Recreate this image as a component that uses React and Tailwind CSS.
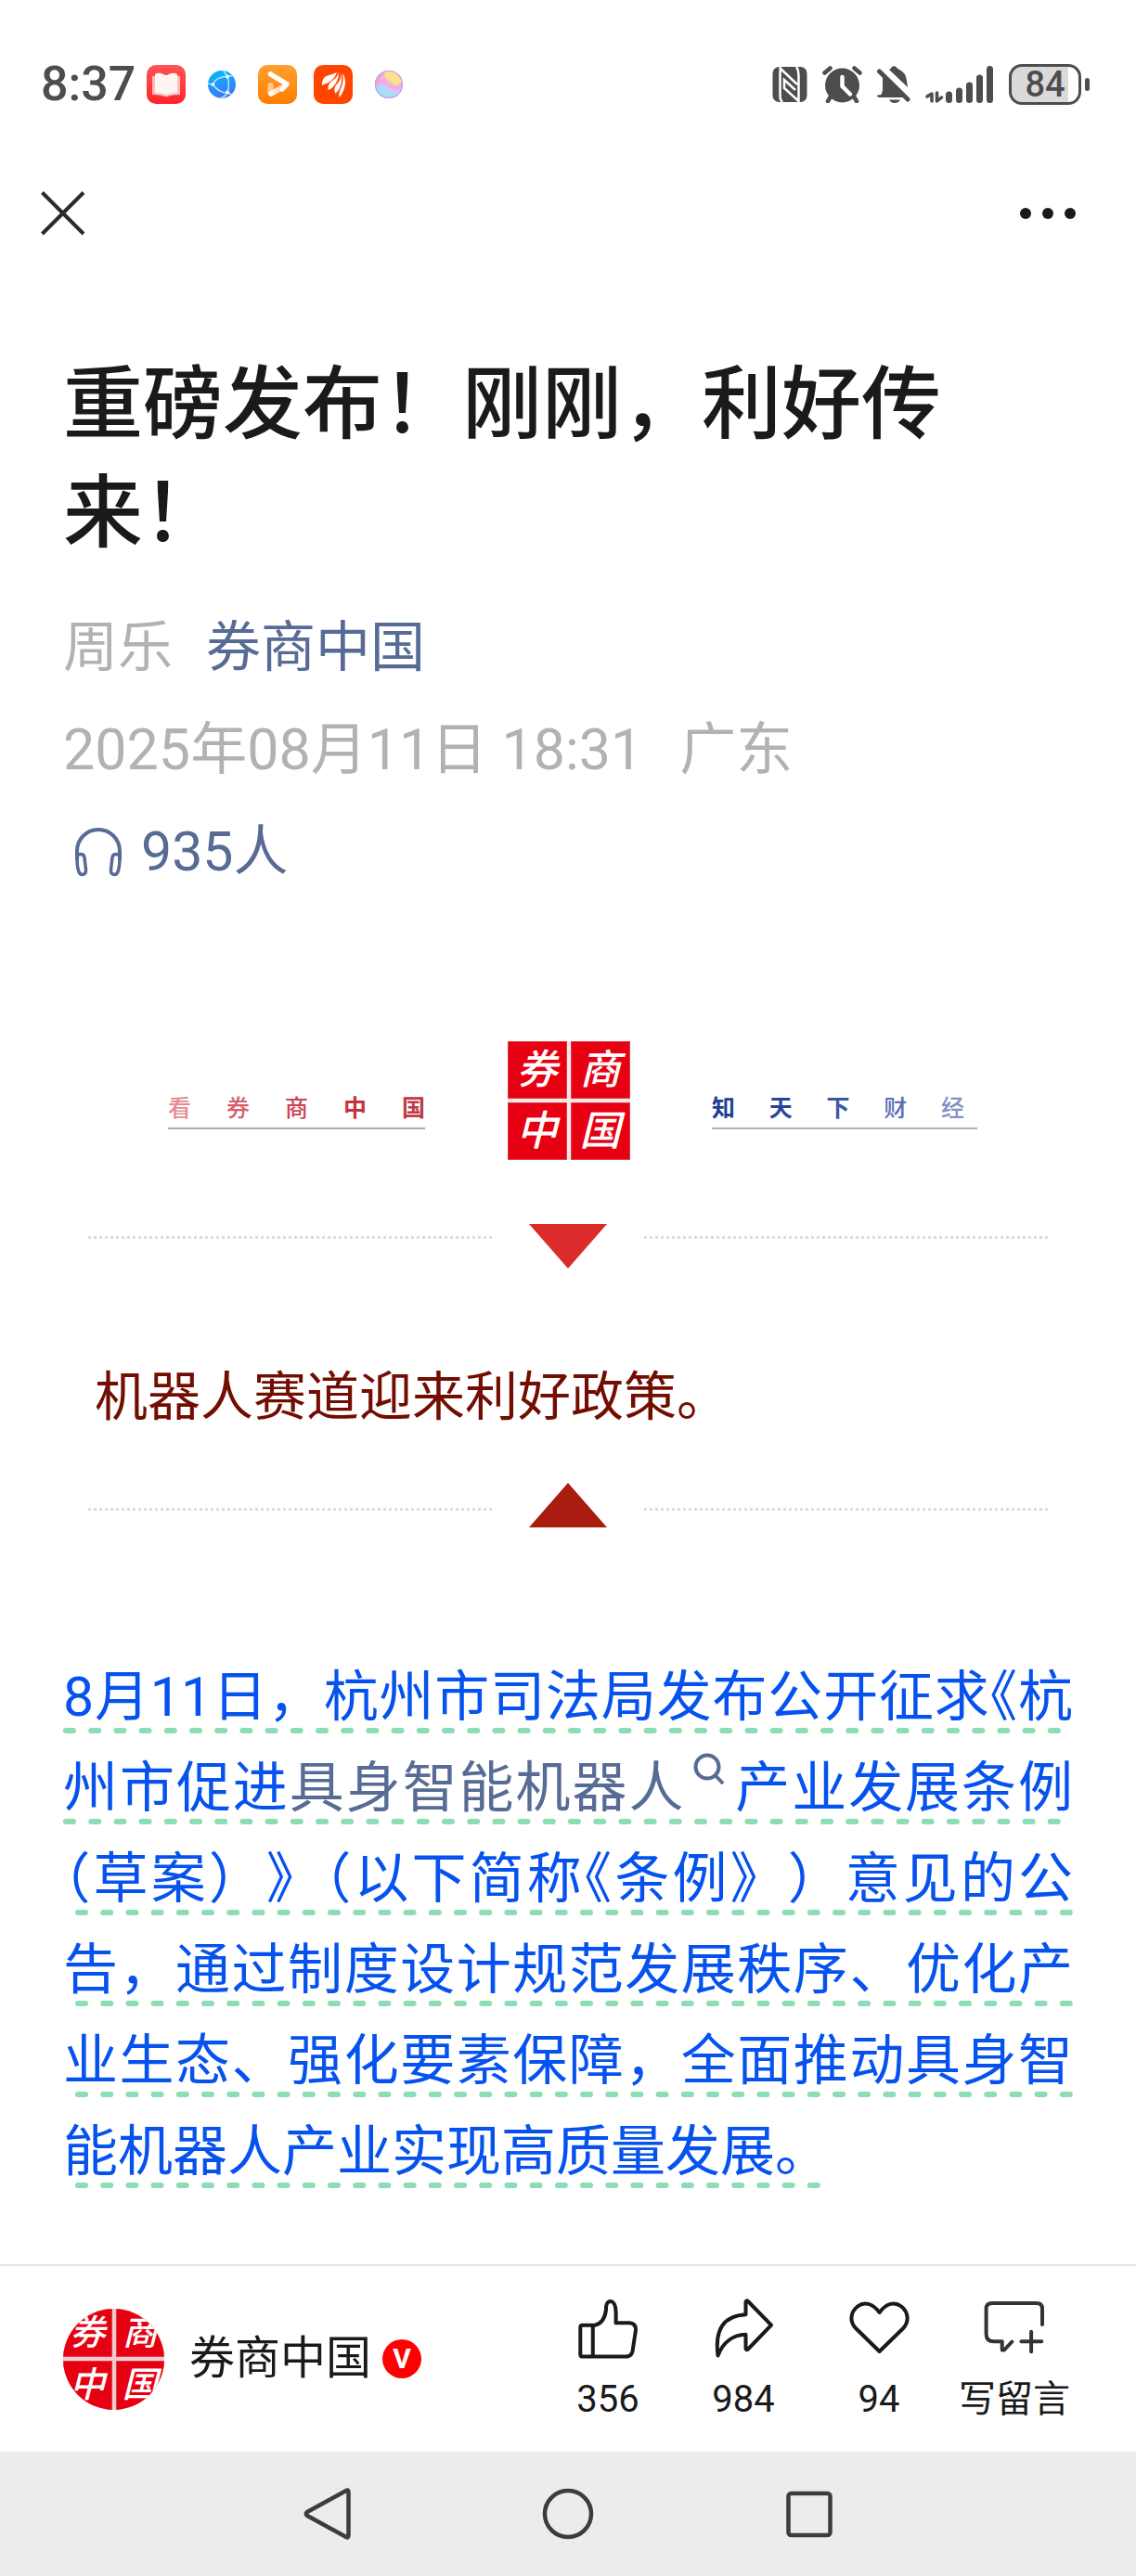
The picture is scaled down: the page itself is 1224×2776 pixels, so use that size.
const ink = "#1a1a1a";

function StatusApps() {
  return (
    <div className="flex items-center gap-[18px]">
      <svg width="42" height="42" viewBox="0 0 42 42" aria-hidden="true">
        <defs>
          <linearGradient id="reader" x1="0" y1="0" x2="0" y2="1">
            <stop offset="0" stopColor="#ff5555" />
            <stop offset="1" stopColor="#ff2428" />
          </linearGradient>
        </defs>
        <rect width="42" height="42" rx="10" fill="url(#reader)" />
        <path d="M6 12h30v20q-10 0-15 2.500q-5-2.500-15-2.500z" fill="#ffbcbc" />
        <path d="M9 10q4-2 8-.5q2.500 1.500 4 1.500q1.500 0 4-1.500q4-1.500 8 .5v20.500q-8-.5-12 2q-4-2.500-12-2z" fill="#fff5f3" />
      </svg>
      <svg width="42" height="42" viewBox="0 0 42 42" aria-hidden="true">
        <defs>
          <linearGradient id="globe" x1="0" y1="0" x2="0.3" y2="1">
            <stop offset="0" stopColor="#00bfff" />
            <stop offset="1" stopColor="#3b78f5" />
          </linearGradient>
          <clipPath id="globeClip"><circle cx="21" cy="21" r="15" /></clipPath>
        </defs>
        <circle cx="21" cy="21" r="15" fill="url(#globe)" />
        <g clipPath="url(#globeClip)" fill="none" stroke="#b5e4ff" strokeWidth="1.500">
          <path d="M11 21q5-9 16-8.500q3 9 0 17.500q-9 0-16-9M6 20l5 1M27 12.500q5-1 8-1M27 30l5 2M27 12.500L22 5M27 30q-3 5-8 6" />
        </g>
        <circle cx="11.500" cy="21" r="1.800" fill="#fff" />
        <circle cx="27" cy="12.500" r="2" fill="#fff" />
        <circle cx="27" cy="29.500" r="2" fill="#fff" />
      </svg>
      <svg width="42" height="42" viewBox="0 0 42 42" aria-hidden="true">
        <defs>
          <linearGradient id="video" x1="0" y1="0" x2="0" y2="1">
            <stop offset="0" stopColor="#ffa031" />
            <stop offset="1" stopColor="#ff7d00" />
          </linearGradient>
          <linearGradient id="fold" x1="0" y1="0" x2="1" y2="0">
            <stop offset="0" stopColor="#fff" />
            <stop offset="1" stopColor="#ffb56b" />
          </linearGradient>
        </defs>
        <rect width="42" height="42" rx="10" fill="url(#video)" />
        <path d="M13.500 22v8" stroke="#ffc896" strokeWidth="6" strokeLinecap="round" />
        <path d="M14 31L30 22" stroke="url(#fold)" strokeWidth="5.500" strokeLinecap="round" />
        <path d="M13.500 10L31 20.500L26 26" stroke="#fff" strokeWidth="5.500" strokeLinecap="round" strokeLinejoin="round" fill="none" />
      </svg>
      <svg width="42" height="42" viewBox="0 0 42 42" aria-hidden="true">
        <rect width="42" height="42" rx="10" fill="#ff4500" />
        <path d="M25 8Q20 10 15 11.500Q8 14 9 22Q12 20 15 19.500Q22 16 25 8z" fill="#fff" />
        <path d="M27 7.500Q26 13 20 17Q15 20 15.500 27Q18 26 20 24.500Q27 18 27 7.500z" fill="#fff" />
        <path d="M29 8Q30 15 25.500 20Q21 24 23 30.500Q26 29 27.500 26Q31.500 18 29 8z" fill="#fff" />
        <path d="M31 9Q34.500 14 34 20Q33 29 27.500 35Q26.500 31 28.500 27Q33 18 31 9z" fill="#fff" />
      </svg>
      <svg width="42" height="42" viewBox="0 0 42 42" aria-hidden="true">
        <defs>
          <clipPath id="pearl"><circle cx="21" cy="21" r="15" /></clipPath>
        </defs>
        <g clipPath="url(#pearl)">
          <rect width="42" height="42" fill="#f0b8ee" />
          <circle cx="26" cy="13" r="10" fill="#ffe08a" />
          <path d="M6 6h12Q12 12 11 22L6 26z" fill="#f7a8c4" />
          <path d="M12 20Q18 20 24 25Q30 28 37 24V14Q34 24 28 22Q22 18 16 12z" fill="#eaa0f0" opacity=".6" />
          <path d="M5 24Q14 18 21 26Q28 32 36 28V38H5z" fill="#a9dcfb" />
        </g>
        <circle cx="21" cy="21" r="14.500" fill="none" stroke="#b9a4e8" strokeWidth="1.200" />
      </svg>
    </div>
  );
}

function StatusIndicators() {
  return (
    <div className="flex items-center text-[#4d4d4d]">
      <svg width="38" height="40" viewBox="0 0 38 40" aria-label="NFC" role="img">
        <rect x="0.500" y="1" width="37" height="38" rx="7" fill="currentColor" />
        <path d="M8.500 1Q9 3 8.500 8V32Q8.500 37 11 39M8.500 2.500L27 20M26 1Q28.500 4 28.500 12V38L13 24V15L25 26" fill="none" stroke="#fff" strokeWidth="2.500" />
      </svg>
      <svg className="ml-4" width="43" height="40" viewBox="0 0 43 40" aria-label="Alarm" role="img">
        <circle cx="21.500" cy="21" r="18.500" fill="currentColor" />
        <path d="M2.500 7.500L8.500 2.500M40.500 7.500L34.500 2.500M9 33L6 38M34 33L37 38" stroke="currentColor" strokeWidth="4.500" strokeLinecap="round" />
        <path d="M21.500 12v10l8.500 8.500" fill="none" stroke="#fff" strokeWidth="4.500" strokeLinecap="round" strokeLinejoin="round" />
      </svg>
      <svg className="ml-4" width="36" height="40" viewBox="0 0 36 40" aria-label="Muted" role="img">
        <path d="M2 34q4-4 4-9V12L28 34z" fill="currentColor" />
        <path d="M13 4q2-1 3-3q2-1.500 4.500 0q1 2 3.500 3q7 3 8 12l1 7z" fill="currentColor" />
        <path d="M2.500 6L33 36" stroke="currentColor" strokeWidth="5" strokeLinecap="round" />
        <path d="M1.500 32.500H22" stroke="currentColor" strokeWidth="2.500" strokeLinecap="round" />
        <path d="M13 36.500H25Q23 40 19 40Q15 40 13 36.500z" fill="currentColor" />
      </svg>
      <svg className="ml-4" width="74" height="40" viewBox="0 0 74 40" aria-label="Signal" role="img">
        <path d="M7 38V30L2 33M12.500 29V38L17.500 34" fill="none" stroke="currentColor" strokeWidth="3.500" strokeLinecap="round" strokeLinejoin="round" />
        <path d="M25.500 31V36.500M36.500 27V36.500M47.500 21V36.500M58.500 13V36.500M69.500 3.500V36.500" stroke="currentColor" strokeWidth="7" strokeLinecap="round" />
      </svg>
      <div className="ml-4 flex h-11 w-[78px] items-center justify-center rounded-[14px] border-[3px] border-[#4d4d4d] bg-linear-to-r from-[#dadada] from-85% to-white to-85% text-[38px] leading-none font-medium">
        84
      </div>
      <div className="ml-1 h-3.5 w-[5px] rounded-full bg-[#4d4d4d]" />
    </div>
  );
}

function Seal({ round }) {
  const cells = ["券", "商", "中", "国"];
  return (
    <div
      className={
        round
          ? "grid size-[109px] shrink-0 grid-cols-2 gap-1 overflow-hidden rounded-full bg-[#f3c9cb] text-[38px]"
          : "grid h-32 w-[132px] shrink-0 grid-cols-2 gap-1 bg-[#fbe6e7] text-[44px]"
      }
    >
      {cells.map((c) => (
        <span
          key={c}
          className="flex items-center justify-center border border-[#d9414a] bg-[#e60012] leading-none font-medium text-white italic"
        >
          {c}
        </span>
      ))}
    </div>
  );
}

function Slogan({ chars, className }) {
  return (
    <div className={className}>
      {chars.map(([c, color]) => (
        <span key={c} className={color}>{c}</span>
      ))}
    </div>
  );
}

function Divider({ up }) {
  const rule = up
    ? "mt-[27px] h-0 flex-1 border-t-[3px] border-dotted border-[#dcdcdc]"
    : "mt-[13px] h-0 flex-1 border-t-[3px] border-dotted border-[#dcdcdc]";
  return (
    <div className="flex justify-center gap-10 px-[27px]">
      <div className={rule} />
      <svg width="84" height="48" viewBox="0 0 84 48" aria-hidden="true">
        {up ? <path d="M0 48L42 0L84 48z" fill="#aa1c10" /> : <path d="M0 0H84L42 48z" fill="#da2c2a" />}
      </svg>
      <div className={rule} />
    </div>
  );
}

function Open({ children }) {
  return <span className="[font-feature-settings:'halt']">{children}</span>;
}

function Line({ children, start = 16, last }) {
  return (
    <span className={last ? "block w-[828px] max-w-full" : "block [text-align-last:justify]"}>
      <span className="block leading-[66px] whitespace-nowrap">{children}</span>
      <svg className="block h-1.5 w-full" aria-hidden="true">
        <line x1={start} y1="3" x2="100%" y2="3" stroke="#8cddb4" strokeWidth="6" strokeLinecap="round" strokeDasharray="8 19.2" />
      </svg>
    </span>
  );
}

function Action({ label, name, children }) {
  return (
    <button type="button" aria-label={name} className="flex w-[146px] flex-col items-center gap-4">
      <svg width="72" height="72" viewBox="0 0 72 72" fill="none" stroke={ink} strokeWidth="4" strokeLinejoin="round" strokeLinecap="round" aria-hidden="true">
        {children}
      </svg>
      <span className="text-[40px] leading-12">{label}</span>
    </button>
  );
}

export default function App() {
  return (
    <div lang="zh-CN" className="flex min-h-screen flex-col bg-white font-['Roboto','Noto_Sans_CJK_SC',sans-serif] text-[#1a1a1a]">
      <div className="mt-[69px] flex h-11 items-center justify-between pr-[50px] pl-11">
        <div className="flex items-center gap-3">
          <time className="text-[52px] leading-none font-medium text-[#4d4d4d]">8:37</time>
          <StatusApps />
        </div>
        <StatusIndicators />
      </div>

      <header className="mt-[93px] flex items-center justify-between pr-[65px] pl-11">
        <button type="button" aria-label="关闭">
          <svg width="48" height="48" viewBox="0 0 48 48" stroke="#2b2b2b" strokeWidth="4" aria-hidden="true">
            <path d="M1.500 1.500L46 46M46 1.500L1.500 46" />
          </svg>
        </button>
        <button type="button" aria-label="更多" className="flex gap-3 py-[18px]">
          <span className="size-3 rounded-full bg-[#1a1a1a]" />
          <span className="size-3 rounded-full bg-[#1a1a1a]" />
          <span className="size-3 rounded-full bg-[#1a1a1a]" />
        </button>
      </header>

      <main className="flex-1 px-[68px]">
        <h1 className="mt-[124px] text-[86px] leading-[117px] font-medium [text-spacing-trim:space-all]">重磅发布！刚刚，利好传来！</h1>

        <div className="mt-[31px] text-[59px] leading-[110px] text-[#b2b2b2]">
          <div className="flex gap-9">
            <span>周乐</span>
            <a href="#account" className="text-[#576b95]">券商中国</a>
          </div>
          <div className="flex gap-10 text-[61px]">
            <time>2025年08月11日 18:31</time>
            <span>广东</span>
          </div>
          <a href="#listen" className="flex items-center gap-5 pl-3 text-[#576b95]">
            <svg width="52" height="54" viewBox="0 0 52 54" fill="none" stroke="currentColor" strokeWidth="4" aria-hidden="true">
              <path d="M3 36V26a23 23 0 0 1 46 0V36" />
              <path d="M3 33q0-3.500 4-3.500q3.500 0 4 3.500l1.500 13q.5 5-3.500 5.500q-3.500 0-4.500-4.500Q3 42 3 33z" strokeWidth="3.500" />
              <path d="M49 33q0-3.500-4-3.500q-3.500 0-4 3.500l-1.500 13q-.5 5 3.500 5.500q3.500 0 4.500-4.500Q49 42 49 33z" strokeWidth="3.500" />
            </svg>
            <span>935人</span>
          </a>
        </div>

        <div className="mt-[149px] flex items-center justify-between pr-[103px] pl-[113px] text-[25px] leading-8 font-medium">
          <Slogan
            className="mt-6 flex w-[277px] justify-between border-b-2 border-[#b5a9ac] pb-1"
            chars={[["看", "text-[#e58a94]"], ["券", "text-[#d8606c]"], ["商", "text-[#cc4250]"], ["中", "font-bold text-[#c43340]"], ["国", "font-bold text-[#bd3a46]"]]}
          />
          <Seal />
          <Slogan
            className="mt-6 flex w-[286px] justify-between border-b-2 border-[#b0b0b8] pr-3.5 pb-1"
            chars={[["知", "font-bold text-[#1f3f93]"], ["天", "font-bold text-[#24469a]"], ["下", "font-bold text-[#3a58a4]"], ["财", "text-[#5a70b2]"], ["经", "text-[#8290c4]"]]}
          />
        </div>

        <div className="mt-[69px]">
          <Divider />
        </div>
        <p className="mt-[99px] pl-[34px] text-[57px] leading-20 text-[#720d02]">机器人赛道迎来利好政策。</p>
        <div className="mt-[52px]">
          <Divider up />
        </div>

        <p className="mt-[150px] mb-16 flex flex-col gap-[26px] text-[59px] text-[#0552ee] [text-spacing-trim:space-all]">
          <Line start={3}>8月11日，杭州市司法局发布公开征求<Open>《</Open>杭</Line>
          <Line start={3}>
            州市促进
            <a href="#search" className="text-[#576b95]">
              具身智能机器人
              <svg className="mx-2 inline-block -translate-y-1.5 align-top" width="36" height="40" viewBox="0 0 36 40" fill="none" stroke="currentColor" strokeWidth="4" aria-hidden="true">
                <circle cx="16" cy="16" r="12.500" />
                <path d="M24.500 25L33 34" />
              </svg>
            </a>
            产业发展条例
          </Line>
          <Line><Open>（</Open>草案）》<Open>（</Open>以下简称<Open>《</Open>条例》）意见的公</Line>
          <Line>告，通过制度设计规范发展秩序、优化产</Line>
          <Line>业生态、强化要素保障，全面推动具身智</Line>
          <Line last>能机器人产业实现高质量发展。</Line>
        </p>
      </main>

      <footer className="flex h-[202px] items-center justify-between border-t-2 border-[#e4e4e4] pr-[58px] pl-[68px]">
        <a href="#account" className="flex items-center">
          <Seal round />
          <span className="ml-[27px] text-[49px]">券商中国</span>
          <span className="ml-3 flex size-[42px] items-center justify-center rounded-full bg-[#fe0000] text-[30px] leading-none font-bold text-white">V</span>
        </a>
        <div className="flex">
          <Action name="点赞" label="356">
            <path d="M6.300 34Q6.300 31.700 8.600 31.700H22C29 30 33 24 34 15C33.500 4 42 3 44 12Q45 17 44.500 29.300H59.600Q66.500 30 66 37L62.500 60Q61 65.500 55.600 65.500H8.600Q6.300 65.500 6.300 63.500zM19.800 32V65" />
          </Action>
          <Action name="分享" label="984">
            <path d="M38.500 6.500Q39.500 4 41.500 6.500L66 31.700L41.500 57Q39.500 59.500 38.500 57V41.700C25 42 14 50 8.500 64.500Q3 22 38.500 20.300z" />
          </Action>
          <Action name="喜欢" label="94">
            <path d="M36.600 18C29 8 20 6 13 11.500C5 18 4 28 11.500 35.500L36.600 60L61.700 35.500C69 28 68 18 60.200 11.500C53 6 44 8 36.600 18z" />
          </Action>
          <Action name="写留言" label="写留言">
            <path d="M66 31V14Q66 8 60 8H12Q5.600 8 5.600 14V41Q5.600 49.300 14 49.300H22.700V58.500L25 58.500L33.400 49.500M43.400 49.300H65.300M54.100 38.700V60.300" stroke="#333" />
          </Action>
        </div>
      </footer>

      <nav className="flex h-[134px] items-center justify-center gap-[204px] bg-[#ececec] text-[#3c3c3c]">
        <button type="button" aria-label="返回">
          <svg width="56" height="56" viewBox="0 0 56 56" fill="none" stroke="currentColor" strokeWidth="4.500" strokeLinejoin="round" aria-hidden="true">
            <path d="M49 3Q51.500 1.500 51.500 5V51Q51.500 54.500 49 53L7 30Q4.500 28 7 26z" />
          </svg>
        </button>
        <button type="button" aria-label="主页">
          <svg width="56" height="56" viewBox="0 0 56 56" fill="none" stroke="currentColor" strokeWidth="4.500" aria-hidden="true">
            <circle cx="28" cy="28" r="25" />
          </svg>
        </button>
        <button type="button" aria-label="最近任务">
          <svg width="56" height="56" viewBox="0 0 56 56" fill="none" stroke="currentColor" strokeWidth="4.500" aria-hidden="true">
            <rect x="5.500" y="6" width="45" height="45" rx="3" />
          </svg>
        </button>
      </nav>
    </div>
  );
}
